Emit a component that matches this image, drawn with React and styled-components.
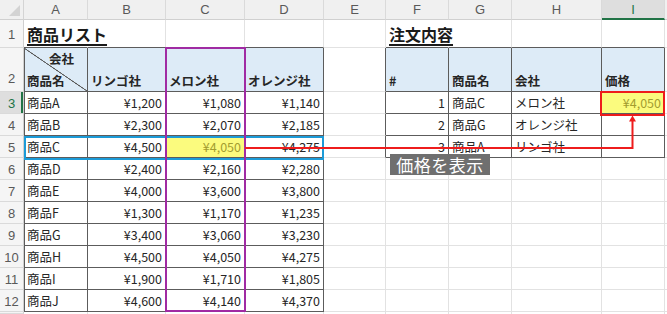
import React from "react";
import styled, { createGlobalStyle, css } from "styled-components";

const GlobalStyle = createGlobalStyle`
  html, body { margin: 0; padding: 0; background: #fff; }
  body { font-family: "Noto Sans CJK JP", "Noto Sans", sans-serif; }
`;

const GRID = "#e2e2e2";
const DARK = "#5c5c5c";
const GREEN = "#217346";
const BLUE_FILL = "#ddebf7";
const YELLOW = "#fbfb7e";
const OLIVE = "#a39d30";

const Frame = styled.div`
  position: relative;
  width: 667px;
  height: 314px;
  overflow: hidden;
`;

const Sheet = styled.div`
  display: grid;
  grid-template-columns: 24px 64px 78px 79px 79px 62px 63px 63px 90px 63px 1fr;
  grid-template-rows: 20px 28px 44px repeat(10, 22px) 2px;
  width: 667px;
`;

const Corner = styled.div`
  position: relative;
  background: #f0f0f0;
  border-right: 1px solid #d4d4d4;
  border-bottom: 1px solid #d0d0d0;
  box-sizing: border-box;
  &::after {
    content: "";
    position: absolute;
    right: 3px;
    bottom: 3px;
    width: 11px;
    height: 11px;
    background: #d3d3d3;
    clip-path: polygon(100% 0, 100% 100%, 0 100%);
  }
`;

const ColHead = styled.div`
  display: flex;
  align-items: center;
  justify-content: center;
  box-sizing: border-box;
  background: ${(p) => (p.$selected ? "#dedede" : "#f0f0f0")};
  border-right: 1px solid #dadada;
  border-bottom: ${(p) => (p.$selected ? `2px solid ${GREEN}` : "1px solid #d0d0d0")};
  color: ${(p) => (p.$selected ? GREEN : "#595959")};
  font-family: "Liberation Sans", Arial, sans-serif;
  font-size: 13px;
  padding-top: ${(p) => (p.$selected ? "1px" : "0")};
`;

const RowHead = styled.div`
  display: flex;
  align-items: center;
  justify-content: center;
  box-sizing: border-box;
  overflow: hidden;
  background: ${(p) => (p.$selected ? "#dedede" : "#f5f5f5")};
  border-bottom: 1px solid #dadada;
  border-right: 1px solid #cfcfcf;
  box-shadow: ${(p) => (p.$selected ? `inset -2px 0 0 ${GREEN}` : "none")};
  color: ${(p) => (p.$selected ? GREEN : "#595959")};
  font-family: "Liberation Sans", Arial, sans-serif;
  font-size: 13px;
  padding-top: ${(p) => (p.$tall ? "18px" : "1px")};
`;

const Cell = styled.div`
  display: flex;
  align-items: flex-end;
  justify-content: ${(p) => (p.$right ? "flex-end" : "flex-start")};
  box-sizing: border-box;
  min-width: 0;
  padding: 0 3px 2px 3px;
  font-size: 12.5px;
  line-height: 17px;
  color: #262626;
  white-space: nowrap;
  background: ${(p) => (p.$fill === "blue" ? BLUE_FILL : p.$fill === "yellow" ? YELLOW : "transparent")};
  border-right: 1px solid ${(p) => (p.$hideR ? "transparent" : p.$darkR ? DARK : GRID)};
  border-bottom: 1px solid ${(p) => (p.$darkB ? DARK : GRID)};
  ${(p) => p.$insetL && css`box-shadow: inset 1px 0 0 ${DARK};`}
  ${(p) => p.$bold && css`font-weight: 700;`}
  ${(p) => p.$fill === "yellow" && css`color: ${OLIVE};`}
`;

const TitleCell = styled(Cell)`
  overflow: visible;
  padding-bottom: 3px;
`;

const Title = styled.span`
  font-size: 16px;
  font-weight: 700;
  line-height: 20px;
  text-decoration: underline;
  text-decoration-thickness: 2px;
  text-underline-offset: 3px;
  color: #1a1a1a;
`;

const DiagCell = styled(Cell)`
  flex-direction: column;
  align-items: stretch;
  justify-content: space-between;
  padding-top: 2px;
  background: linear-gradient(
      to top right,
      transparent calc(50% - 0.7px),
      ${DARK} calc(50% - 0.3px),
      ${DARK} calc(50% + 0.3px),
      transparent calc(50% + 0.7px)
    ),
    ${BLUE_FILL};
`;

const DiagTop = styled.span`
  align-self: flex-end;
  margin-right: 10px;
`;

const DiagBottom = styled.span`
  align-self: flex-start;
`;

const Overlay = styled.div`
  position: absolute;
  pointer-events: none;
  box-sizing: border-box;
`;

const ColumnFrame = styled(Overlay)`
  left: 165px;
  top: 47px;
  width: 81px;
  height: 265px;
  border: 2px solid #a02ba3;
`;

const RowFrame = styled(Overlay)`
  left: 24px;
  top: 136px;
  width: 300px;
  height: 24px;
  border: 2px solid #1c9bd8;
`;

const TargetFrame = styled(Overlay)`
  left: 600px;
  top: 91px;
  width: 65px;
  height: 25px;
  border: 2px solid #ee1c1c;
`;

const ArrowSvg = styled.svg`
  position: absolute;
  left: 0;
  top: 0;
  pointer-events: none;
`;

const Label = styled.div`
  position: absolute;
  left: 390px;
  top: 154px;
  width: 100px;
  height: 21px;
  display: flex;
  align-items: center;
  justify-content: center;
  background: #6f6f6f;
  color: #fff;
  font-size: 17px;
  line-height: 21px;
  letter-spacing: 0.5px;
  white-space: nowrap;
`;

const COLS = ["A", "B", "C", "D", "E", "F", "G", "H", "I", ""];

const products = [
  ["商品A", 1200, 1080, 1140],
  ["商品B", 2300, 2070, 2185],
  ["商品C", 4500, 4050, 4275],
  ["商品D", 2400, 2160, 2280],
  ["商品E", 4000, 3600, 3800],
  ["商品F", 1300, 1170, 1235],
  ["商品G", 3400, 3060, 3230],
  ["商品H", 4500, 4050, 4275],
  ["商品I", 1900, 1710, 1805],
  ["商品J", 4600, 4140, 4370],
];

const orders = [
  ["1", "商品C", "メロン社", "¥4,050"],
  ["2", "商品G", "オレンジ社", ""],
  ["3", "商品A", "リンゴ社", ""],
];

const yen = (n) => "¥" + n.toLocaleString("en-US");

function borders(r, c) {
  const inLeft = c >= 1 && c <= 4;
  const inRight = c >= 6 && c <= 9;
  return {
    $darkB: (r >= 1 && r <= 12 && inLeft) || (r >= 1 && r <= 5 && inRight),
    $darkR: (r >= 2 && r <= 12 && inLeft) || (r >= 2 && r <= 5 && c >= 5 && c <= 9),
    $insetL: r >= 2 && r <= 12 && c === 1,
    $hideR: r === 1 && (c === 1 || c === 6),
  };
}

function renderCell(r, c) {
  const b = borders(r, c);
  const key = `${r}-${c}`;
  if (r === 1 && c === 1)
    return (
      <TitleCell key={key} {...b}>
        <Title>商品リスト</Title>
      </TitleCell>
    );
  if (r === 1 && c === 6)
    return (
      <TitleCell key={key} {...b}>
        <Title>注文内容</Title>
      </TitleCell>
    );
  if (r === 2) {
    if (c === 1)
      return (
        <DiagCell key={key} {...b} $bold>
          <DiagTop>会社</DiagTop>
          <DiagBottom>商品名</DiagBottom>
        </DiagCell>
      );
    const heads = { 2: "リンゴ社", 3: "メロン社", 4: "オレンジ社", 6: "#", 7: "商品名", 8: "会社", 9: "価格" };
    if (heads[c])
      return (
        <Cell key={key} {...b} $bold $fill="blue">
          {heads[c]}
        </Cell>
      );
  }
  if (r >= 3 && r <= 12 && c >= 1 && c <= 4) {
    const p = products[r - 3];
    const isHit = r === 5 && c === 3;
    return (
      <Cell key={key} {...b} $right={c > 1} $fill={isHit ? "yellow" : undefined}>
        {c === 1 ? p[0] : yen(p[c - 1])}
      </Cell>
    );
  }
  if (r >= 3 && r <= 5 && c >= 6 && c <= 9) {
    const o = orders[r - 3];
    const isHit = r === 3 && c === 9;
    return (
      <Cell key={key} {...b} $right={c === 6 || c === 9} $fill={isHit ? "yellow" : undefined}>
        {o[c - 6]}
      </Cell>
    );
  }
  return <Cell key={key} {...b} />;
}

export default function App() {
  const rows = Array.from({ length: 12 }, (_, i) => i + 1);
  return (
    <>
      <GlobalStyle />
      <Frame>
        <Sheet>
          <Corner />
          {COLS.map((l, i) => (
            <ColHead key={i} $selected={l === "I"}>
              {l}
            </ColHead>
          ))}
          {rows.map((r) => (
            <React.Fragment key={r}>
              <RowHead $selected={r === 3} $tall={r === 2}>
                {r}
              </RowHead>
              {COLS.map((_, i) => renderCell(r, i + 1))}
            </React.Fragment>
          ))}
          <RowHead />
          {COLS.map((_, i) => (
            <Cell key={`f-${i}`} />
          ))}
        </Sheet>
        <RowFrame />
        <ColumnFrame />
        <TargetFrame />
        <ArrowSvg width="667" height="314" viewBox="0 0 667 314">
          <path d="M245 148 H632.5 V120" fill="none" stroke="#ee1c1c" strokeWidth="2" />
          <polygon points="632.5,115.5 629,121.5 636,121.5" fill="#ee1c1c" />
        </ArrowSvg>
        <Label>価格を表示</Label>
      </Frame>
    </>
  );
}
